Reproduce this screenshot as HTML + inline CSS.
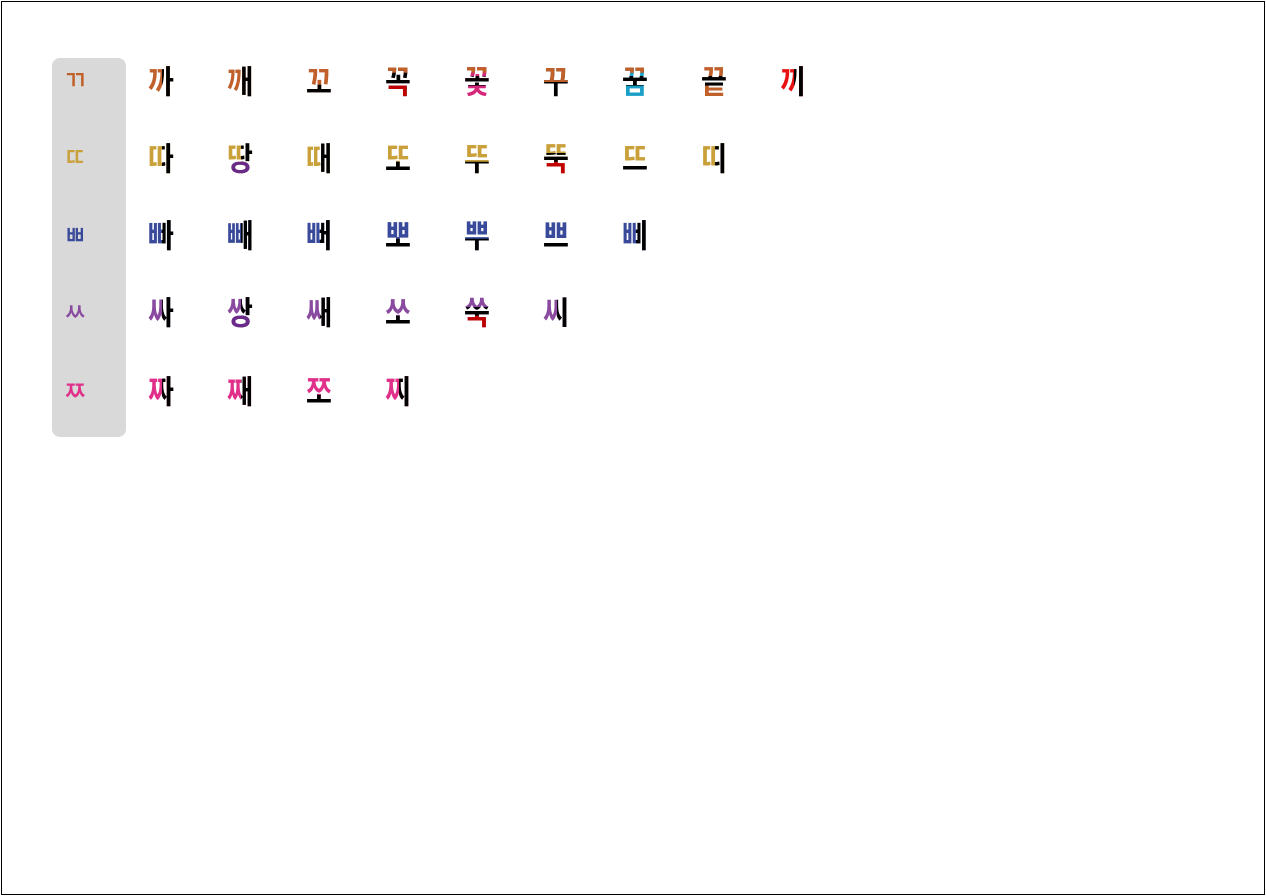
<!DOCTYPE html>
<html><head><meta charset="utf-8"><style>
html,body{margin:0;padding:0;background:#fff}
body{width:1266px;height:896px;position:relative;overflow:hidden;font-family:"Liberation Sans","Noto Sans CJK KR",sans-serif}
.frame{position:absolute;left:1px;top:1px;width:1262px;height:892px;border:1px solid #000}
.side{position:absolute;left:52px;top:58px;width:74px;height:379px;background:#d9d9d9;border-radius:8px}
.c{position:absolute;width:60px;height:40px;margin-left:-30px;margin-top:-20px}
.c span{position:absolute;left:0;top:0;width:60px;text-align:center;font-size:32px;line-height:40px;font-weight:700;font-family:"Noto Sans CJK KR","NanumGothic",sans-serif;transform:scaleX(.88)}
.R{clip-path:inset(0 0 0 52%)}
.B{clip-path:inset(62% 0 0 0)}
.M{clip-path:inset(40% 0 36% 0)}
.T{clip-path:inset(0 0 45% 0)}
.l span{font-size:27px;font-weight:500;transform:scaleX(.9)}
</style></head><body>
<div class="frame"></div>
<div class="side"></div>
<div class="c l" style="left:75px;top:79px"><span style="color:#c0602a">ㄲ</span></div>
<div class="c l" style="left:75px;top:156px"><span style="color:#c9a03a">ㄸ</span></div>
<div class="c l" style="left:75px;top:234px"><span style="color:#3a4a9a">ㅃ</span></div>
<div class="c l" style="left:75px;top:311px"><span style="color:#8a4aa0">ㅆ</span></div>
<div class="c l" style="left:75px;top:390px"><span style="color:#e0308a">ㅉ</span></div>

<div class="c" style="left:161px;top:80px"><span style="color:#c0602a">까</span><span class="R" style="color:#000">까</span></div>
<div class="c" style="left:240px;top:80px"><span style="color:#c0602a">깨</span><span class="R" style="color:#000">깨</span></div>
<div class="c" style="left:319px;top:80px"><span style="color:#c0602a">꼬</span><span class="B" style="color:#000">꼬</span></div>
<div class="c" style="left:398px;top:80px"><span style="color:#000">꼭</span><span class="B" style="color:#c00000">꼭</span><span style="color:#c0602a;clip-path:inset(0 0 68% 0)">꼭</span></div>
<div class="c" style="left:477px;top:80px"><span style="color:#d6287a">꽃</span><span class="M" style="color:#000">꽃</span><span style="color:#c0602a;clip-path:inset(0 0 68% 0)">꽃</span></div>
<div class="c" style="left:556px;top:80px"><span style="color:#000">꾸</span><span class="T" style="color:#c0602a">꾸</span></div>
<div class="c" style="left:635px;top:80px"><span style="color:#1aa0c8">꿈</span><span class="M" style="color:#000">꿈</span><span style="color:#c0602a;clip-path:inset(0 0 68% 0)">꿈</span></div>
<div class="c" style="left:714px;top:80px"><span style="color:#c0602a">끝</span><span class="M" style="color:#000">끝</span></div>
<div class="c" style="left:793px;top:80px"><span style="color:#e81010">끼</span><span class="R" style="color:#000">끼</span></div>

<div class="c" style="left:161px;top:157px"><span style="color:#c9a03a">따</span><span class="R" style="color:#000">따</span></div>
<div class="c" style="left:240px;top:157px"><span style="color:#c9a03a">땅</span><span class="R" style="color:#000">땅</span><span class="B" style="color:#6a2a8a">땅</span></div>
<div class="c" style="left:319px;top:157px"><span style="color:#c9a03a">때</span><span class="R" style="color:#000">때</span></div>
<div class="c" style="left:398px;top:157px"><span style="color:#c9a03a">또</span><span class="B" style="color:#000">또</span></div>
<div class="c" style="left:477px;top:157px"><span style="color:#c9a03a">뚜</span><span class="B" style="color:#000">뚜</span></div>
<div class="c" style="left:556px;top:157px"><span style="color:#c9a03a">뚝</span><span class="M" style="color:#000">뚝</span><span class="B" style="color:#c00000">뚝</span></div>
<div class="c" style="left:635px;top:157px"><span style="color:#c9a03a">뜨</span><span class="B" style="color:#000">뜨</span></div>
<div class="c" style="left:714px;top:157px"><span style="color:#c9a03a">띠</span><span class="R" style="color:#000">띠</span></div>

<div class="c" style="left:161px;top:234px"><span style="color:#3a4a9a">빠</span><span class="R" style="color:#000">빠</span></div>
<div class="c" style="left:240px;top:234px"><span style="color:#3a4a9a">빼</span><span class="R" style="color:#000">빼</span></div>
<div class="c" style="left:319px;top:234px"><span style="color:#3a4a9a">뻐</span><span class="R" style="color:#000">뻐</span></div>
<div class="c" style="left:398px;top:234px"><span style="color:#3a4a9a">뽀</span><span class="B" style="color:#000">뽀</span></div>
<div class="c" style="left:477px;top:234px"><span style="color:#3a4a9a">뿌</span><span class="B" style="color:#000">뿌</span></div>
<div class="c" style="left:556px;top:234px"><span style="color:#3a4a9a">쁘</span><span class="B" style="color:#000">쁘</span></div>
<div class="c" style="left:635px;top:234px"><span style="color:#3a4a9a">삐</span><span class="R" style="color:#000">삐</span></div>

<div class="c" style="left:161px;top:311px"><span style="color:#8a4aa0">싸</span><span class="R" style="color:#000">싸</span></div>
<div class="c" style="left:240px;top:311px"><span style="color:#8a4aa0">쌍</span><span class="R" style="color:#000">쌍</span><span class="B" style="color:#6a2a8a">쌍</span></div>
<div class="c" style="left:319px;top:311px"><span style="color:#8a4aa0">쌔</span><span class="R" style="color:#000">쌔</span></div>
<div class="c" style="left:398px;top:311px"><span style="color:#8a4aa0">쏘</span><span class="B" style="color:#000">쏘</span></div>
<div class="c" style="left:477px;top:311px"><span style="color:#8a4aa0">쑥</span><span class="M" style="color:#000">쑥</span><span class="B" style="color:#c00000">쑥</span></div>
<div class="c" style="left:556px;top:311px"><span style="color:#8a4aa0">씨</span><span class="R" style="color:#000">씨</span></div>

<div class="c" style="left:161px;top:390px"><span style="color:#e0308a">짜</span><span class="R" style="color:#000">짜</span></div>
<div class="c" style="left:240px;top:390px"><span style="color:#e0308a">째</span><span class="R" style="color:#000">째</span></div>
<div class="c" style="left:319px;top:390px"><span style="color:#e0308a">쪼</span><span class="B" style="color:#000">쪼</span></div>
<div class="c" style="left:398px;top:390px"><span style="color:#e0308a">찌</span><span class="R" style="color:#000">찌</span></div>
</body></html>
